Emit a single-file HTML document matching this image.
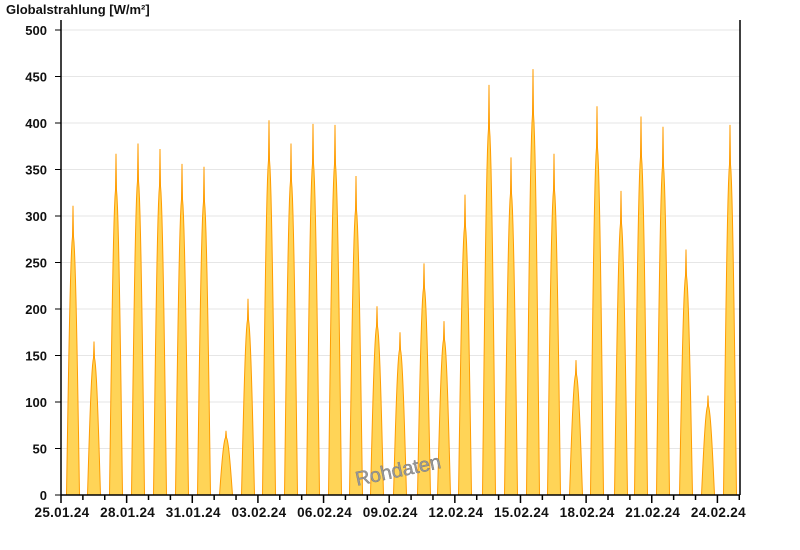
<!DOCTYPE html>
<html><head><meta charset="utf-8"><style>
html,body{margin:0;padding:0;background:#fff;width:800px;height:550px;overflow:hidden}
svg{display:block}
text{font-family:"Liberation Sans",Arial,sans-serif;font-weight:bold;fill:#111}
</style></head><body>
<svg id="s" width="800" height="550" xmlns="http://www.w3.org/2000/svg">
<text x="6" y="14" font-size="13">Globalstrahlung [W/m²]</text>
<g id="grid"></g>
<g id="bars"></g>
<g id="axes"></g>
<text x="398" y="477" font-size="20" transform="rotate(-12 398 470)" text-anchor="middle" style="font-weight:normal;fill:#999;stroke:#777;stroke-width:0.4">Rohdaten</text>
</svg>
<script>
var ns="http://www.w3.org/2000/svg",s=document.getElementById('s');
function el(t,a,p){var e=document.createElementNS(ns,t);for(var k in a)e.setAttribute(k,a[k]);(p||s).appendChild(e);return e;}
var L=61,R=740,B=495,k=0.93,day=21.88;
var g=document.getElementById('grid'),ax=document.getElementById('axes'),br=document.getElementById('bars');
for(var v=0;v<=500;v+=50){var y=B-v*k;
 if(v>0)el('line',{x1:L,x2:R,y1:y,y2:y,stroke:'#e6e6e6','stroke-width':1},g);
 el('line',{x1:L-6,x2:L,y1:y,y2:y,stroke:'#000','stroke-width':1},ax);
 var t=el('text',{x:47,y:y+5,'font-size':13,'text-anchor':'end'},ax);t.textContent=v;}
el('line',{x1:L,x2:L,y1:20,y2:B,stroke:'#000','stroke-width':1.5},ax);
el('line',{x1:R,x2:R,y1:20,y2:B,stroke:'#000','stroke-width':1.5},ax);
el('line',{x1:L,x2:R,y1:B,y2:B,stroke:'#000','stroke-width':1.5},ax);
var labels=['25.01.24','28.01.24','31.01.24','03.02.24','06.02.24','09.02.24','12.02.24','15.02.24','18.02.24','21.02.24','24.02.24'];
for(var d=0;d<=31;d++){var x=L+d*day;if(x>R+1)break;
 el('line',{x1:x,x2:x,y1:B,y2:B+(d%3==0?8:5),stroke:'#000','stroke-width':1.5},ax);
 if(d%3==0){var t=el('text',{x:x+1,y:B+22,'font-size':13.5,'text-anchor':'middle','letter-spacing':'0.3'},ax);t.textContent=labels[d/3];}}
var pk=[311,165,367,378,372,356,353,69,211,403,378,399,398,343,203,175,249,187,323,441,363,458,367,145,418,327,407,396,264,107,398];
var px=[73,94,116,138,160,182,204,226,248,269,291,313,335,356,377,400,424,444,465,489,511,533,554,576,597,621,641,663,686,708,730];
for(var i=0;i<pk.length;i++){var c=px[i],h=pk[i],pts=[(c-6.5)+','+B];
 for(var dx=-6.5;dx<=6.5;dx+=0.5){var u=Math.min(1,Math.abs(dx)/6.5);var f=Math.cos(u*Math.PI/2)*0.9;
  if(Math.abs(dx)<0.3)f=1;
  pts.push((c+dx)+','+(B-h*k*f).toFixed(1));}
 pts.push((c+6.5)+','+B);
 el('polygon',{points:pts.join(' '),fill:'#ffd457',stroke:'#ff9c00','stroke-width':1},br);}
</script>
</body></html>
